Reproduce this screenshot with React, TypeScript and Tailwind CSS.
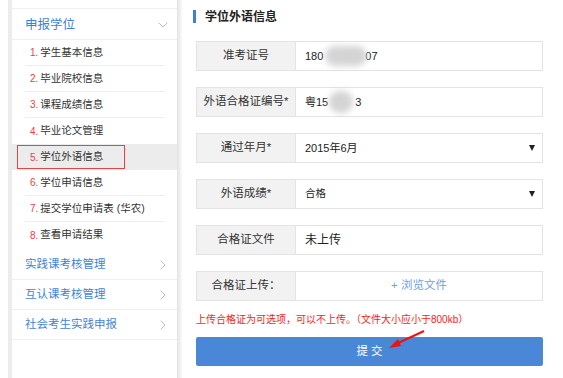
import { ChevronDown, ChevronRight } from "lucide-react";

const subItems = [
    "学生基本信息",
    "毕业院校信息",
    "课程成绩信息",
    "毕业论文管理",
    "学位外语信息",
    "学位申请信息",
    "提交学位申请表 (华农)",
    "查看申请结果",
];

const sections = ["实践课考核管理", "互认课考核管理", "社会考生实践申报"];

function Sidebar() {
    return (
        <div className="ml-2 flex h-full w-[175px] shrink-0">
            <div className="w-1 bg-[#ececec]" />
            <div className="flex w-[165px] flex-col bg-white">
                <div className="h-[9px] border-b border-[#efefef]" />
                {/* 申报学位 */}
                <div className="flex h-[31px] items-center justify-between border-b border-[#efefef] pl-[13px] pr-[6px] pt-[2px]">
                    <span className="text-[12.5px] text-[#3d7fd6]">申报学位</span>
                    <ChevronDown className="h-4 w-4 text-[#bdbdbd]" strokeWidth={1.5} />
                </div>
                <div className="flex flex-col">
                    {subItems.map((label, i) => {
                        const active = i === 4;
                        const lined = i !== 3 && i !== 4 && i !== 7;
                        if (active) {
                            return (
                                <div key={label} className="flex h-[26px] items-center bg-[#ececec] pl-[5px]">
                                    <div className="flex h-[24px] w-[108px] items-center border border-[#e84343] pl-[12px]">
                                        <span className="text-[10px] text-[#f03c3c]">{i + 1}.</span>
                                        <span className="ml-[2px] text-[10.5px] text-[#333]">{label}</span>
                                    </div>
                                </div>
                            );
                        }
                        return (
                            <div key={label} className="flex h-[26px] pl-[13px]">
                                <div
                                    className={
                                        lined
                                            ? "flex w-[140px] items-center border-b border-[#eeeeee] pl-[5px]"
                                            : "flex w-[140px] items-center pl-[5px]"
                                    }
                                >
                                    <span className="text-[10px] text-[#f03c3c]">{i + 1}.</span>
                                    <span className="ml-[2px] text-[10.5px] text-[#333]">{label}</span>
                                </div>
                            </div>
                        );
                    })}
                </div>
                <div className="h-[2px]" />
                {sections.map((s) => (
                    <div key={s} className="flex h-[30px] items-center justify-between border-b border-[#efefef] pl-[13px] pr-[6px]">
                        <span className="text-[11.5px] text-[#4584d6]">{s}</span>
                        <ChevronRight className="h-4 w-4 text-[#bdbdbd]" strokeWidth={1.5} />
                    </div>
                ))}
            </div>
            <div className="w-[6px] bg-gradient-to-r from-[#e2e2e2] to-white" />
        </div>
    );
}

function Row({ label, children }: { label: string; children: React.ReactNode }) {
    return (
        <div className="flex h-[30px] border border-[#e3e3e3]">
            <div className="flex w-[99px] shrink-0 items-center justify-center border-r border-[#e3e3e3] bg-[#f2f2f2] text-[11.5px] text-[#333]">
                {label}
            </div>
            <div className="relative flex flex-1 items-center bg-white pl-[9px] text-[11px] text-[#222]">{children}</div>
        </div>
    );
}

function Caret() {
    return <span className="absolute right-[7px] top-[11px] h-0 w-0 border-x-[3px] border-t-[6px] border-x-transparent border-t-[#222]" />;
}

export default function App() {
    return (
        <div
            className="flex h-[378px] w-[563px] overflow-hidden bg-white"
            style={{ fontFamily: '"Liberation Sans", Arial, "Noto Sans CJK SC", sans-serif' }}
        >
            <Sidebar />
            <div className="ml-[13px] flex w-[347px] flex-col">
                <div className="mt-[10px] flex h-[13px] items-center">
                    <div className="ml-[-3px] h-[13px] w-[3px] bg-[#3d7fd6]" />
                    <span className="ml-[9px] text-[12px] font-bold text-[#222]">学位外语信息</span>
                </div>
                <div className="mt-[18px] flex flex-col gap-[16px]">
                    <Row label="准考证号">
                        <span>180</span>
                        <span className="ml-[2px] h-[20px] w-[42px] rounded-full bg-[#d4d4d4] blur-[3px]" />
                        <span className="ml-[-2px]">07</span>
                    </Row>
                    <Row label="外语合格证编号*">
                        <span>粤15</span>
                        <span className="ml-[1px] h-[22px] w-[24px] rounded-full bg-[#d4d4d4] blur-[3px]" />
                        <span className="ml-[2px]">3</span>
                    </Row>
                    <Row label="通过年月*">
                        <span>2015年6月</span>
                        <Caret />
                    </Row>
                    <Row label="外语成绩*">
                        <span className="text-[10.5px]">合格</span>
                        <Caret />
                    </Row>
                    <Row label="合格证文件">
                        <span className="text-[12px]">未上传</span>
                    </Row>
                    <Row label="合格证上传：">
                        <span className="w-full pr-[9px] text-center text-[11.5px] text-[#6f9fdf]">+ 浏览文件</span>
                    </Row>
                </div>
                <div className="mt-[11px] text-[10px] text-[#ff1a1a]">
                    上传合格证为可选项，可以不上传。（文件大小应小于800kb）
                </div>
                <div className="relative mt-[10px] flex h-[29px] items-center justify-center rounded-[2px] bg-[#4a88d7] text-[11.5px] text-white">
                    提&nbsp;交
                    <svg className="absolute left-[192px] top-[-8px]" width="38" height="22" viewBox="0 0 38 22">
                        <line x1="6" y1="16" x2="36" y2="2" stroke="#e11" strokeWidth="2" />
                        <polygon points="1,19 10,10 13,17" fill="#e11" />
                    </svg>
                </div>
            </div>
        </div>
    );
}
